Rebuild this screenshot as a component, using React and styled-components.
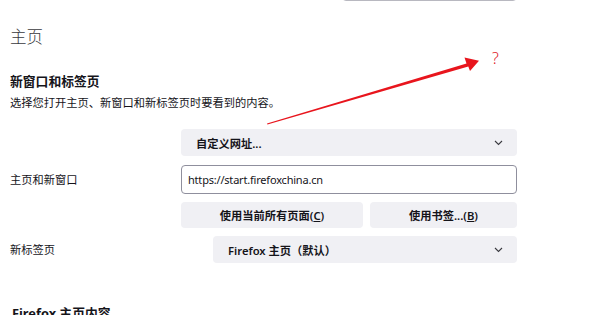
import React from "react";
import styled, { createGlobalStyle } from "styled-components";

const Global = createGlobalStyle`
  html, body { margin: 0; padding: 0; background: #fff; }
  body {
    font-family: "Noto Sans", "Noto Sans CJK SC", sans-serif;
    color: #15141a;
    overflow: hidden;
  }
`;

const Page = styled.div`
  position: relative;
  width: 600px;
  height: 315px;
  overflow: hidden;
`;

const Column = styled.div`
  width: 517px;
  padding-left: 10px;
  box-sizing: border-box;
  display: flex;
  flex-direction: column;
`;

const TopBar = styled.div`
  display: flex;
  justify-content: flex-end;
  margin-top: -29px;
`;

const SearchBox = styled.div`
  width: 175px;
  height: 30px;
  box-sizing: border-box;
  border: 1px solid #b8b8c0;
  border-radius: 4px;
`;

const Heading = styled.h1`
  margin: 25px 0 0;
  font-size: 16.5px;
  line-height: 22px;
  font-weight: 300;
  color: #3a3a3e;
`;

const SubHeading = styled.h2`
  margin: 24px 0 0;
  font-size: 12.8px;
  line-height: 18px;
  font-weight: 700;
`;

const Desc = styled.p`
  margin: 5px 0 0;
  font-size: 11.25px;
  line-height: 16px;
`;

const Row = styled.div`
  display: flex;
  align-items: center;
  justify-content: space-between;
  margin-top: ${(p) => p.$mt || 0}px;
`;

const Label = styled.div`
  font-size: 11.25px;
  line-height: 16px;
  margin-top: ${(p) => p.$shift || 0}px;
`;

const Controls = styled.div`
  width: ${(p) => p.$w}px;
  display: flex;
  flex-direction: column;
  gap: 8px;
`;

const Select = styled.div`
  height: 27px;
  box-sizing: border-box;
  background: #f0f0f4;
  border-radius: 4px;
  display: flex;
  align-items: center;
  justify-content: space-between;
  padding: 0 14px 0 15px;
  font-size: 11.25px;
  font-weight: 600;
`;

const Input = styled.div`
  height: 29px;
  box-sizing: border-box;
  border: 1px solid #8f8f9d;
  border-radius: 4px;
  display: flex;
  align-items: center;
  padding-left: 6px;
  font-size: 11px;
  letter-spacing: -0.2px;
  margin-top: 1px;
`;

const ButtonRow = styled.div`
  display: flex;
  gap: 7px;
`;

const Button = styled.div`
  flex: ${(p) => p.$grow};
  height: 26px;
  background: #f0f0f4;
  border-radius: 4px;
  display: flex;
  align-items: center;
  justify-content: center;
  font-size: 11.25px;
  font-weight: 600;
`;

const Key = styled.span`
  text-decoration: underline;
`;

const SectionTitle = styled.h2`
  margin: 41px 0 0 2px;
  font-size: 12.8px;
  line-height: 18px;
  font-weight: 700;
`;

const Overlay = styled.svg`
  position: absolute;
  left: 0;
  top: 0;
  pointer-events: none;
`;

const Question = styled.span`
  position: absolute;
  left: 492px;
  top: 47px;
  font-family: "Noto Sans", sans-serif;
  font-size: 16px;
  font-weight: 300;
  color: #e02028;
`;

const Chevron = () => (
  <svg width="9" height="6" viewBox="0 0 9 6">
    <polyline points="1,1 4.5,4.5 8,1" fill="none" stroke="#3a3a40" strokeWidth="1.1" />
  </svg>
);

export default function App() {
  return (
    <Page>
      <Global />
      <Column>
        <TopBar>
          <SearchBox />
        </TopBar>
        <Heading>主页</Heading>
        <SubHeading>新窗口和标签页</SubHeading>
        <Desc>选择您打开主页、新窗口和新标签页时要看到的内容。</Desc>
        <Row $mt={18}>
          <Label $shift={3}>主页和新窗口</Label>
          <Controls $w={336}>
            <Select>
              <span>自定义网址...</span>
              <Chevron />
            </Select>
            <Input>https://start.firefoxchina.cn</Input>
            <ButtonRow>
              <Button $grow={182}>使用当前所有页面(<Key>C</Key>)</Button>
              <Button $grow={147}>使用书签...(<Key>B</Key>)</Button>
            </ButtonRow>
          </Controls>
        </Row>
        <Row $mt={8}>
          <Label>新标签页</Label>
          <Controls $w={304}>
            <Select>
              <span>Firefox 主页（默认）</span>
              <Chevron />
            </Select>
          </Controls>
        </Row>
        <SectionTitle>Firefox 主页内容</SectionTitle>
      </Column>
      <Overlay width="600" height="315" viewBox="0 0 600 315">
        <polygon
          points="267,123.4 466.5,63.6 464.5,57.5 479,60.8 470,71 468.3,66.6 267.4,124.6"
          fill="#e8151d"
        />
      </Overlay>
      <Question>?</Question>
    </Page>
  );
}
